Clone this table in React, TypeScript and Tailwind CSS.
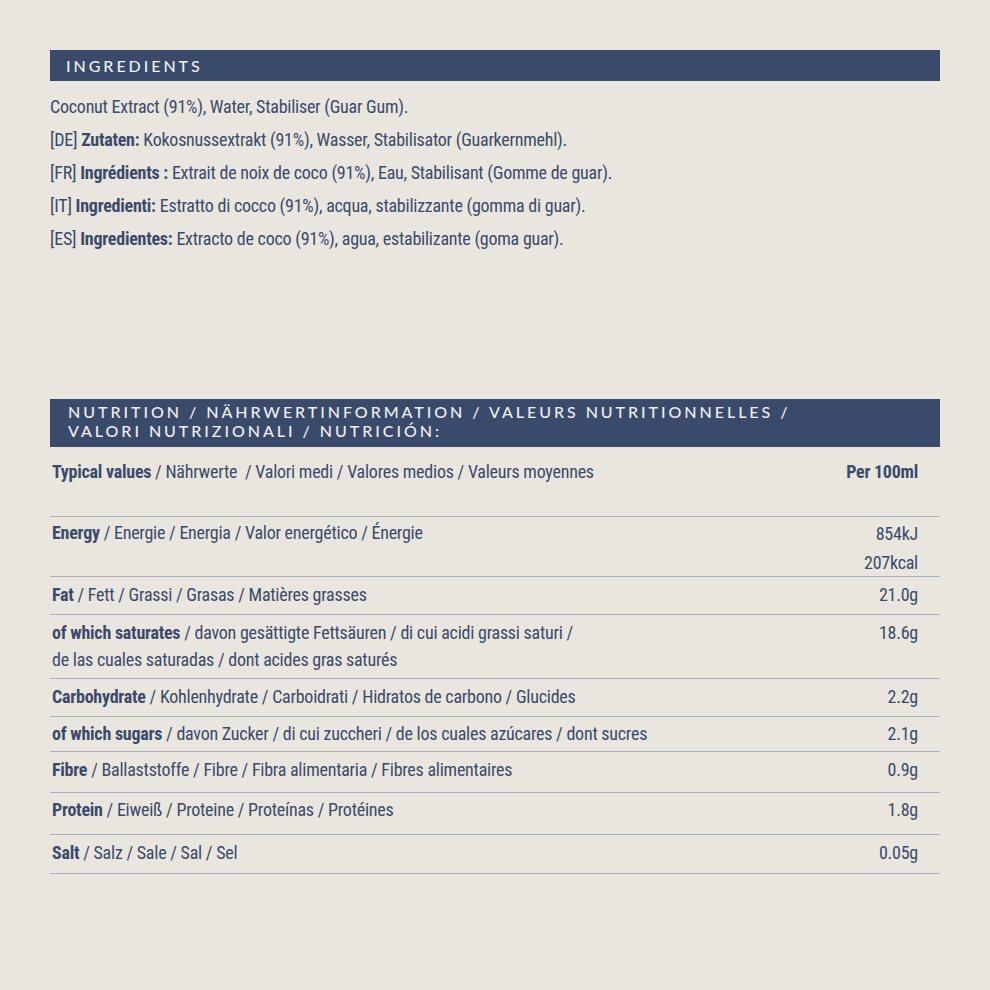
import React from 'react';

const bodyFont = "font-['Roboto_Condensed','Roboto',sans-serif] font-stretch-condensed tracking-[-0.015em]";

interface NutritionRow {
    label: string;
    rest: React.ReactNode;
    values: string[];
    rowClass: string;
}

const rows: NutritionRow[] = [
    { label: 'Energy', rest: ' / Energie / Energia / Valor energético / Énergie', values: ['854kJ', '207kcal'], rowClass: 'h-[60px] pt-[2px]' },
    { label: 'Fat', rest: ' / Fett / Grassi / Grasas / Matières grasses', values: ['21.0g'], rowClass: 'h-[38px] pt-[4px]' },
    {
        label: 'of which saturates',
        rest: (
            <>
                {' / davon gesättigte Fettsäuren / di cui acidi grassi saturi /'}
                <br />
                {'de las cuales saturadas / dont acides gras saturés'}
            </>
        ),
        values: ['18.6g'],
        rowClass: 'h-[64px] pt-[4px]'
    },
    { label: 'Carbohydrate', rest: ' / Kohlenhydrate / Carboidrati / Hidratos de carbono / Glucides', values: ['2.2g'], rowClass: 'h-[38px] pt-[4px]' },
    { label: 'of which sugars', rest: ' / davon Zucker / di cui zuccheri / de los cuales azúcares / dont sucres', values: ['2.1g'], rowClass: 'h-[35px] pt-[3px]' },
    { label: 'Fibre', rest: ' / Ballaststoffe / Fibre / Fibra alimentaria / Fibres alimentaires', values: ['0.9g'], rowClass: 'h-[41px] pt-[4px]' },
    { label: 'Protein', rest: ' / Eiweiß / Proteine / Proteínas / Protéines', values: ['1.8g'], rowClass: 'h-[42px] pt-[3px]' },
    { label: 'Salt', rest: ' / Salz / Sale / Sal / Sel', values: ['0.05g'], rowClass: 'h-[39px] pt-[4px]' }
];

const ingredients: { code?: string; label?: string; text: string }[] = [
    { text: 'Coconut Extract (91%), Water, Stabiliser (Guar Gum).' },
    { code: '[DE]', label: 'Zutaten:', text: 'Kokosnussextrakt (91%), Wasser, Stabilisator (Guarkernmehl).' },
    { code: '[FR]', label: 'Ingrédients :', text: 'Extrait de noix de coco (91%), Eau, Stabilisant (Gomme de guar).' },
    { code: '[IT]', label: 'Ingredienti:', text: 'Estratto di cocco (91%), acqua, stabilizzante (gomma di guar).' },
    { code: '[ES]', label: 'Ingredientes:', text: 'Extracto de coco (91%), agua, estabilizante (goma guar).' }
];

function SectionBar({ children, className }: { children: React.ReactNode; className: string }) {
    return (
        <div className={`bg-[#3a4a6b] text-[#eef0f4] font-['Lato','Open_Sans',sans-serif] font-medium uppercase tracking-[0.185em] text-[16px] ${className}`}>
            {children}
        </div>
    );
}

export default function App() {
    return (
        <div className={`w-[990px] h-[990px] bg-[#e9e6df] px-[50px] pt-[50px] text-[#3b4a6b] ${bodyFont}`}>
            <SectionBar className="h-[31px] pl-[16px] leading-[32px]">Ingredients</SectionBar>

            <div className="mt-[9px] text-[18px] leading-[33px]">
                {ingredients.map((line, i) => (
                    <div key={i} className="whitespace-nowrap">
                        {line.code && <span>{line.code} </span>}
                        {line.label && <span className="font-bold">{line.label} </span>}
                        <span>{line.text}</span>
                    </div>
                ))}
            </div>

            <SectionBar className="mt-[144px] h-[48px] pl-[18px] pt-[3px] leading-[19px]">
                Nutrition / Nährwertinformation / Valeurs nutritionnelles /
                <br />
                Valori nutrizionali / Nutrición:
            </SectionBar>

            <div className="text-[18px] leading-[27px]">
                <div className="h-[70px] pt-[11px] pl-[2px] pr-[22px] flex justify-between border-b border-[#aab0b8]">
                    <div>
                        <span className="font-bold">Typical values</span> / Nährwerte&nbsp; / Valori medi / Valores medios / Valeurs moyennes
                    </div>
                    <div className="font-bold">Per 100ml</div>
                </div>
                {rows.map(row => (
                    <div key={row.label} className={`${row.rowClass} pl-[2px] pr-[22px] flex justify-between border-b border-[#aab0b8]`}>
                        <div>
                            <span className="font-bold">{row.label}</span>
                            {row.rest}
                        </div>
                        <div className="text-right">
                            {row.values.map(v => (
                                <div key={v} className={row.values.length > 1 ? 'leading-[29px]' : ''}>{v}</div>
                            ))}
                        </div>
                    </div>
                ))}
            </div>
        </div>
    );
}
